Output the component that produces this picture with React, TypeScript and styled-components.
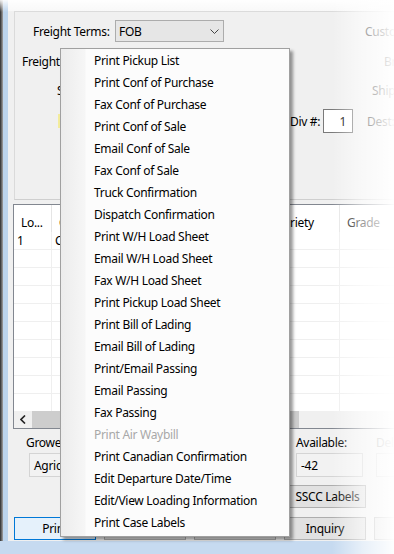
import React from "react";
import styled, { createGlobalStyle } from "styled-components";

const GlobalStyle = createGlobalStyle`
  html, body { margin: 0; padding: 0; background: #fff; }
  body {
    font-family: "Noto Sans", "Liberation Sans", sans-serif;
    font-size: 12px;
    letter-spacing: -0.3px;
    color: #000;
  }
  #root { width: 394px; height: 554px; }
`;

const menuItems = [
  "Print Pickup List",
  "Print Conf of Purchase",
  "Fax Conf of Purchase",
  "Print Conf of Sale",
  "Email Conf of Sale",
  "Fax Conf of Sale",
  "Truck Confirmation",
  "Dispatch Confirmation",
  "Print W/H Load Sheet",
  "Email W/H Load Sheet",
  "Fax W/H Load Sheet",
  "Print Pickup Load Sheet",
  "Print Bill of Lading",
  "Email Bill of Lading",
  "Print/Email Passing",
  "Email Passing",
  "Fax Passing",
  "Print Air Waybill",
  "Print Canadian Confirmation",
  "Edit Departure Date/Time",
  "Edit/View Loading Information",
  "Print Case Labels",
];
const disabledItems = ["Print Air Waybill"];

const columns = [
  { title: "Lo...", width: 38 },
  { title: "Customer", width: 110 },
  { title: "Commodity", width: 108 },
  { title: "Variety", width: 70 },
  { title: "Grade", width: 80 },
  { title: "Size", width: 60 },
];

const rows = [["1", "CAMPOS", "", "", "", ""]];

export default function App() {
  return (
    <>
      <GlobalStyle />
      <Screen>
        <Main>
          <EdgeShadow />
          <FrameSide />
          <Window>
            <TitleStrip />
            <Panel>
              <FormRow $indent={18} $h={22}>
                <Label $w={82}>Freight Terms:</Label>
                <Select>
                  <span>FOB</span>
                  <svg width="9" height="5" viewBox="0 0 9 5">
                    <polyline points="0.5,0.5 4.5,4.5 8.5,0.5" fill="none" stroke="#444" strokeWidth="1" />
                  </svg>
                </Select>
                <Label $ml={141}>Customer:</Label>
              </FormRow>
              <FormRow $indent={7} $h={20}>
                <Label $w={362}>Freight Charges:</Label>
                <Label>Broker:</Label>
              </FormRow>
              <FormRow $indent={42} $h={20}>
                <Label $w={315}>Ship Via:</Label>
                <Label>Shipper:</Label>
              </FormRow>
              <FormRow $indent={43} $h={24}>
                <YellowField />
                <Label $ml={32} $w={33}>Div #:</Label>
                <DivInput>1</DivInput>
                <Label $ml={14}>Dest:</Label>
              </FormRow>
            </Panel>

            <Grid>
              <HeaderRow>
                {columns.map((c) => (
                  <HeaderCell key={c.title} $w={c.width}>{c.title}</HeaderCell>
                ))}
              </HeaderRow>
              <GridBody>
                {Array.from({ length: 11 }).map((_, r) => (
                  <DataRow key={r}>
                    {columns.map((c, i) => (
                      <DataCell key={c.title} $w={c.width}>{rows[r]?.[i] ?? ""}</DataCell>
                    ))}
                  </DataRow>
                ))}
              </GridBody>
              <ScrollBar>
                <ScrollArrow>
                  <svg width="6" height="9" viewBox="0 0 6 9">
                    <polyline points="5,0.5 1,4.5 5,8.5" fill="none" stroke="#222" strokeWidth="1.6" />
                  </svg>
                </ScrollArrow>
                <ScrollThumb />
              </ScrollBar>
            </Grid>

            <FieldRow>
              <FieldGroup $w={270}>
                <FieldLabel>Grower:</FieldLabel>
                <ReadOnlyBox $w={150} $ml={3}>Agricola Campos</ReadOnlyBox>
              </FieldGroup>
              <FieldGroup $w={80}>
                <FieldLabel>Available:</FieldLabel>
                <ReadOnlyBox $w={67}>-42</ReadOnlyBox>
              </FieldGroup>
              <FieldGroup $w={80}>
                <FieldLabel $muted>Delivered:</FieldLabel>
                <ReadOnlyBox $w={67} />
              </FieldGroup>
            </FieldRow>

            <SsccRow>
              <Button $w={77}>SSCC Labels</Button>
            </SsccRow>

            <ButtonRow>
              <Button $focused>Print</Button>
              <Button>Save</Button>
              <Button>Cancel</Button>
              <Button>Inquiry</Button>
              <Button>Close</Button>
            </ButtonRow>
          </Window>
        </Main>
        <FrameBottom />

        <RightFade />
        <TopFade />

        <Menu>
          {menuItems.map((m) => (
            <MenuItem key={m} $disabled={disabledItems.includes(m)}>{m}</MenuItem>
          ))}
        </Menu>
      </Screen>
    </>
  );
}

const Screen = styled.div`
  position: relative;
  width: 394px;
  height: 554px;
  overflow: hidden;
  display: flex;
  flex-direction: column;
  background: #c6daf0;
`;

const Main = styled.div`
  display: flex;
  height: 541px;
  flex-shrink: 0;
`;

const EdgeShadow = styled.div`
  width: 3px;
  flex-shrink: 0;
  background: linear-gradient(to right, #2a2a2a, #a4a4a4);
`;

const FrameSide = styled.div`
  width: 5px;
  flex-shrink: 0;
  background: #bcd4ec;
`;

const FrameBottom = styled.div`
  height: 13px;
  background: #c6daf0;
`;

const Window = styled.div`
  width: 440px;
  flex-shrink: 0;
  display: flex;
  flex-direction: column;
  background: #f0f0f0;
`;

const TitleStrip = styled.div`
  height: 11px;
  background: #f8f8f8;
`;

const Panel = styled.div`
  margin-left: 6px;
  height: 189px;
  box-sizing: border-box;
  border-top: 1px solid #dadada;
  border-left: 1px solid #dadada;
  border-bottom: 1px solid #cfcfcf;
  padding-top: 8px;
  display: flex;
  flex-direction: column;
  gap: 9px;
`;

const FormRow = styled.div<{ $indent: number; $h: number }>`
  display: flex;
  align-items: center;
  height: ${(p) => p.$h}px;
  padding-left: ${(p) => p.$indent}px;
`;

const Label = styled.div<{ $w?: number; $ml?: number }>`
  flex-shrink: 0;
  white-space: nowrap;
  width: ${(p) => (p.$w ? `${p.$w}px` : "auto")};
  margin-left: ${(p) => p.$ml ?? 0}px;
`;

const Select = styled.div`
  width: 109px;
  height: 22px;
  box-sizing: border-box;
  border: 1px solid #acacac;
  background: #e6e6e6;
  display: flex;
  align-items: center;
  justify-content: space-between;
  padding: 0 4px 0 3px;
`;

const YellowField = styled.div`
  width: 200px;
  height: 14px;
  background: #f3ec9c;
`;

const DivInput = styled.div`
  width: 30px;
  height: 24px;
  box-sizing: border-box;
  border: 1px solid #7a7a7a;
  background: #fff;
  display: flex;
  align-items: center;
  justify-content: flex-end;
  padding-right: 6px;
`;

const Grid = styled.div`
  margin-top: 4px;
  margin-left: 5px;
  width: 430px;
  height: 225px;
  box-sizing: border-box;
  border: 1px solid #828790;
  background: #fff;
  display: flex;
  flex-direction: column;
`;

const HeaderRow = styled.div`
  display: flex;
  height: 27px;
  flex-shrink: 0;
`;

const HeaderCell = styled.div<{ $w: number }>`
  width: ${(p) => p.$w}px;
  flex-shrink: 0;
  box-sizing: border-box;
  border-right: 1px solid #e5e5e5;
  padding: 0 0 1px 7px;
  display: flex;
  align-items: flex-end;
  white-space: nowrap;
  overflow: hidden;
`;

const GridBody = styled.div`
  height: 179px;
  overflow: hidden;
  flex-shrink: 0;
`;

const DataRow = styled.div`
  display: flex;
  height: 18px;
  box-sizing: border-box;
  border-bottom: 1px solid #efefef;
`;

const DataCell = styled.div<{ $w: number }>`
  width: ${(p) => p.$w}px;
  flex-shrink: 0;
  box-sizing: border-box;
  border-right: 1px solid #efefef;
  padding-left: 3px;
  line-height: 18px;
  white-space: nowrap;
  overflow: hidden;
`;

const ScrollBar = styled.div`
  height: 17px;
  display: flex;
  background: #f0f0f0;
`;

const ScrollArrow = styled.div`
  width: 17px;
  display: flex;
  align-items: center;
  justify-content: center;
`;

const ScrollThumb = styled.div`
  width: 267px;
  margin-left: 1px;
  background: #cdcdcd;
`;

const FieldRow = styled.div`
  display: flex;
  padding: 7px 0 0 18px;
`;

const FieldGroup = styled.div<{ $w: number }>`
  width: ${(p) => p.$w}px;
  flex-shrink: 0;
  display: flex;
  flex-direction: column;
  gap: 3px;
`;

const FieldLabel = styled.div<{ $muted?: boolean }>`
  height: 14px;
  line-height: 14px;
  color: ${(p) => (p.$muted ? "#9a9a9a" : "#000")};
`;

const ReadOnlyBox = styled.div<{ $w: number; $ml?: number }>`
  width: ${(p) => p.$w}px;
  margin-left: ${(p) => p.$ml ?? 0}px;
  height: 24px;
  box-sizing: border-box;
  border: 1px solid #d4d4d4;
  background: #f2f2f2;
  display: flex;
  align-items: center;
  padding-left: 4px;
  white-space: nowrap;
  overflow: hidden;
`;

const SsccRow = styled.div`
  display: flex;
  margin-top: 8px;
  padding-left: 281px;
`;

const ButtonRow = styled.div`
  display: flex;
  gap: 8px;
  margin-top: 9px;
  padding-left: 6px;
`;

const Button = styled.div<{ $w?: number; $focused?: boolean }>`
  width: ${(p) => p.$w ?? 82}px;
  height: 23px;
  flex-shrink: 0;
  box-sizing: border-box;
  border: 1px solid ${(p) => (p.$focused ? "#0078d7" : "#adadad")};
  background: ${(p) => (p.$focused ? "#e5f1fb" : "#e1e1e1")};
  display: flex;
  align-items: center;
  justify-content: center;
  white-space: nowrap;
`;

const RightFade = styled.div`
  position: absolute;
  top: 0;
  right: 0;
  bottom: 0;
  width: 62px;
  pointer-events: none;
  background: linear-gradient(to right, rgba(255, 255, 255, 0), rgba(255, 255, 255, 0.6) 50%, rgba(255, 255, 255, 0.97));
`;

const TopFade = styled.div`
  position: absolute;
  top: 0;
  left: 0;
  right: 0;
  height: 12px;
  pointer-events: none;
  background: linear-gradient(to bottom, rgba(255, 255, 255, 0.9), rgba(255, 255, 255, 0));
`;

const Menu = styled.div`
  position: absolute;
  left: 60px;
  top: 48px;
  width: 230px;
  box-sizing: border-box;
  border: 1px solid #a0a0a0;
  padding-bottom: 3px;
  background: linear-gradient(to right, #ececec 0, #f6f6f6 24px, #fcfcfc 25px, #fcfcfc 100%);
  box-shadow: 3px 3px 3px rgba(0, 0, 0, 0.4);
`;

const MenuItem = styled.div<{ $disabled?: boolean }>`
  height: 22px;
  line-height: 23px;
  padding-left: 33px;
  white-space: nowrap;
  color: ${(p) => (p.$disabled ? "#a8a8a8" : "#000")};
`;
